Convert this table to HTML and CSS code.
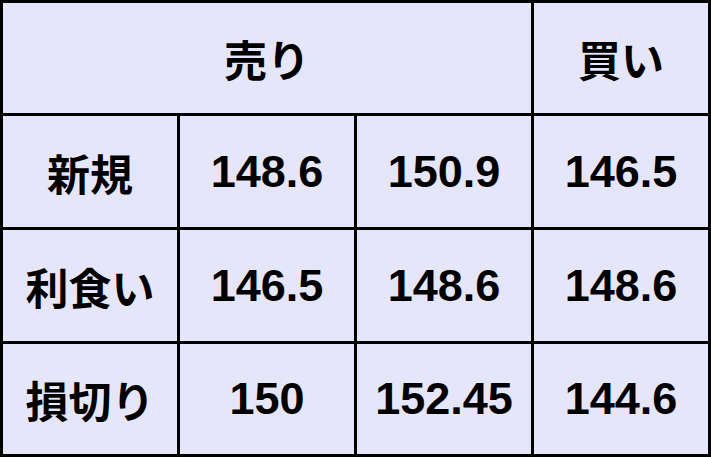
FILE: index.html
```html
<!DOCTYPE html>
<html lang="ja">
<head>
<meta charset="utf-8">
<link rel="stylesheet" href="styles.css">
</head>
<body>
<div class="grid">
  <div class="cell jp span3">売り</div>
  <div class="cell jp">買い</div>
  <div class="cell jp">新規</div>
  <div class="cell num">148.6</div>
  <div class="cell num">150.9</div>
  <div class="cell num">146.5</div>
  <div class="cell jp">利食い</div>
  <div class="cell num">146.5</div>
  <div class="cell num">148.6</div>
  <div class="cell num">148.6</div>
  <div class="cell jp">損切り</div>
  <div class="cell num">150</div>
  <div class="cell num">152.45</div>
  <div class="cell num">144.6</div>
</div>
</body>
</html>
```
FILE: styles.css
```css
html, body {
  margin: 0;
  padding: 0;
  background: #e6e6fa;
}
.grid {
  display: grid;
  grid-template-columns: repeat(4, 174px);
  grid-template-rows: 110px 111px 111px 110px;
  gap: 3px;
  padding: 3px;
  background: #000;
  width: 705px;
}
.cell {
  background: #e6e6fa;
  display: flex;
  align-items: center;
  justify-content: center;
  color: #000;
}
.span3 {
  grid-column: span 3;
}
.jp {
  font-family: "Noto Sans CJK JP", sans-serif;
  font-weight: 700;
  font-size: 43px;
}
.num {
  font-family: "Liberation Sans", Arial, sans-serif;
  font-weight: 700;
  font-size: 45px;
}
```
